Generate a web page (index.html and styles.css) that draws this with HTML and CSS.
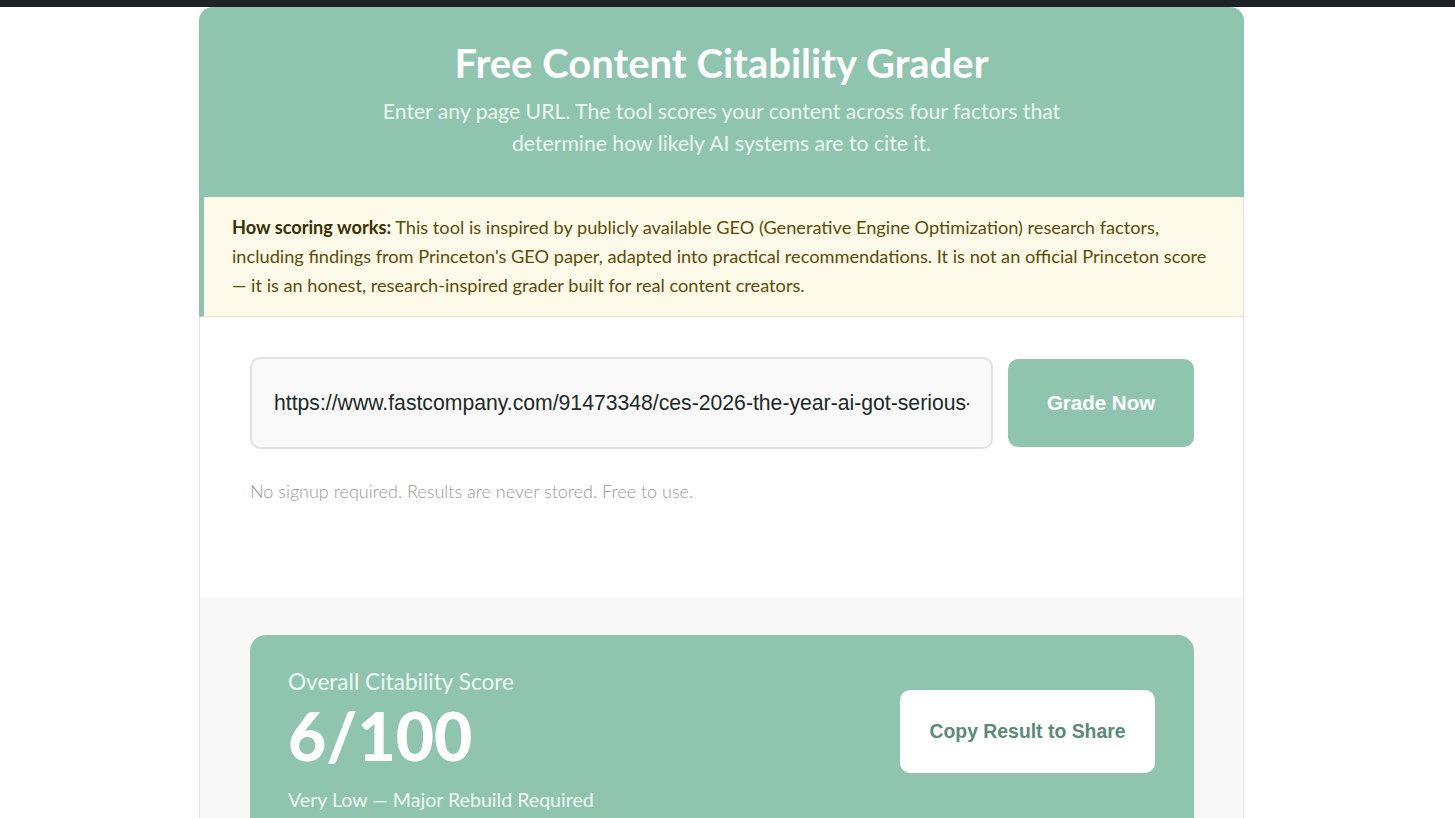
FILE: index.html
```html
<!DOCTYPE html>
<html lang="en">
<head>
<meta charset="utf-8">
<title>Free Content Citability Grader</title>
<link rel="stylesheet" href="styles.css">
</head>
<body>
<div class="topbar"></div>
<main class="tool">
  <header class="hero">
    <h1 class="hero-title">Free Content Citability Grader</h1>
    <p class="hero-sub">Enter any page URL. The tool scores your content across four factors that determine how likely AI systems are to cite it.</p>
  </header>
  <div class="note">
    <p class="note-text"><strong class="note-lead">How scoring works:</strong> This tool is inspired by publicly available GEO (Generative Engine Optimization) research factors, including findings from Princeton's GEO paper, adapted into practical recommendations. It is not an official Princeton score — it is an honest, research-inspired grader built for real content creators.</p>
  </div>
  <section class="form-section">
    <div class="form-row">
      <input class="url-input" type="text" value="https://www.fastcompany.com/91473348/ces-2026-the-year-ai-got-serious-about-health">
      <button class="grade-btn" type="button">Grade Now</button>
    </div>
    <p class="hint">No signup required. Results are never stored. Free to use.</p>
  </section>
  <section class="results">
    <div class="score-card">
      <div class="score-info">
        <div class="score-label">Overall Citability Score</div>
        <div class="score-value">6/100</div>
        <div class="score-verdict">Very Low — Major Rebuild Required</div>
      </div>
      <button class="copy-btn" type="button">Copy Result to Share</button>
    </div>
  </section>
</main>
</body>
</html>
```

FILE: styles.css
```css
* { box-sizing: border-box; }
html, body { margin: 0; padding: 0; background: #ffffff; }
body {
  font-family: "Lato", "Open Sans", sans-serif;
  color: #333;
  overflow: hidden;
}
.topbar {
  height: 7px;
  background: #1f2328;
}
.tool {
  width: 1045px;
  margin: 0 auto 0 199px;
}
.hero {
  background: #8fc5ae;
  border-radius: 14px 14px 0 0;
  text-align: center;
  padding: 31px 40px 38px;
  color: #fff;
}
.hero-title {
  margin: 0;
  font-size: 40px;
  line-height: 50px;
  font-weight: 700;
  color: #ffffff;
}
.hero-sub {
  margin: 7px auto 0;
  max-width: 720px;
  font-size: 21.2px;
  line-height: 32px;
  font-weight: 400;
  color: #eaf6f0;
}
.note {
  background: #fefae9;
  border-left: 5px solid #8fc5ae;
  border-right: 1px solid #e4e4e4;
  border-bottom: 1px solid #e8e4c4;
  padding: 16px 28px 16px 28px;
}
.note-text {
  margin: 0;
  font-size: 18.2px;
  line-height: 29px;
  color: #5c4c06;
}
.note-lead {
  color: #3a3000;
  font-weight: 700;
}
.form-section {
  background: #fff;
  border-left: 1px solid #e4e4e4;
  border-right: 1px solid #e4e4e4;
  padding: 40px 49px 94px 50px;
}
.form-row {
  display: flex;
  align-items: center;
  gap: 15px;
}
.url-input {
  flex: 1;
  height: 92px;
  border: 2px solid #e2e2e2;
  border-radius: 10px;
  background: #f9f9f9;
  padding: 0 22px;
  font-family: "Liberation Sans", Arial, sans-serif;
  font-size: 21.2px;
  color: #1c2a28;
  outline: none;
}
.grade-btn {
  width: 186px;
  height: 88px;
  border: none;
  border-radius: 10px;
  background: #8fc5ae;
  color: #fff;
  font-family: "Liberation Sans", Arial, sans-serif;
  font-size: 20.5px;
  font-weight: 700;
}
.hint {
  margin: 30px 0 0;
  font-size: 18px;
  line-height: 24px;
  font-weight: 300;
  color: #999999;
}
.results {
  background: #f8f8f8;
  border-left: 1px solid #e4e4e4;
  border-right: 1px solid #e4e4e4;
  padding: 38px 49px 40px 50px;
}
.score-card {
  background: #8fc5ae;
  border-radius: 16px;
  padding: 33px 39px 30px 38px;
  display: flex;
  align-items: center;
  justify-content: space-between;
  color: #fff;
}
.score-label {
  font-size: 22.6px;
  line-height: 28px;
  color: #eef8f3;
}
.score-value {
  margin-top: 4px;
  font-size: 66px;
  line-height: 72px;
  font-weight: 900;
  color: #fff;
}
.score-verdict {
  margin-top: 15px;
  font-size: 19.6px;
  line-height: 26px;
  color: #eef8f3;
}
.copy-btn {
  width: 255px;
  height: 83px;
  border: none;
  border-radius: 10px;
  background: #fff;
  color: #5b8a78;
  font-family: "Liberation Sans", Arial, sans-serif;
  font-size: 19.4px;
  font-weight: 700;
  margin-top: -18px;
}
```
